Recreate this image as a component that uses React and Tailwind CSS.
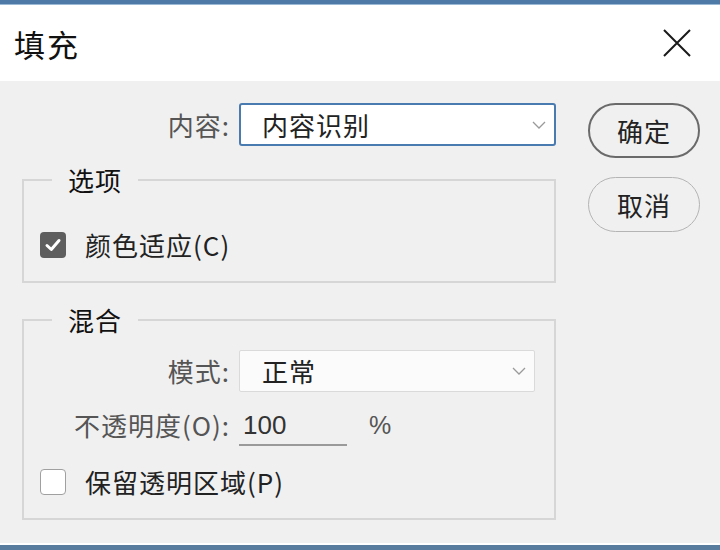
export default function App() {
  const Chevron = () => (
    <svg width="14" height="8" viewBox="0 0 14 8" fill="none">
      <path d="M1 1 L7 7 L13 1" stroke="#9a9a9a" strokeWidth="1.3" />
    </svg>
  );
  const t = "text-[26px] leading-none tracking-[1px]";
  return (
    <div className="w-[720px] h-[550px] flex flex-col bg-[#f0f0f0] overflow-hidden font-['Noto_Sans_CJK_SC',sans-serif]">
      <div className="h-[5px] bg-[#4d7aa6] border-b border-[#9bb8d4]" />
      <div className="h-[76px] bg-white flex items-center justify-between pl-[14px] pr-[28px]">
        <span className="text-[31px] leading-none tracking-[2px] text-[#111]">填充</span>
        <svg width="30" height="30" viewBox="0 0 30 30" fill="none">
          <path d="M2 2 L28 28 M28 2 L2 28" stroke="#1a1a1a" strokeWidth="2" />
        </svg>
      </div>
      <div className="flex-1 flex pl-[22px] pt-[22px]">
        <div className="w-[534px] flex flex-col">
          <div className="flex items-center h-[43px]">
            <div className={`w-[208px] text-right text-[#555] ${t}`}>内容:</div>
            <div className="ml-[9px] w-[317px] h-[43px] border-2 border-[#4a7bb0] bg-white rounded-[3px] flex items-center justify-between pl-[21px] pr-[8px]">
              <span className={`${t} text-[#222]`}>内容识别</span>
              <Chevron />
            </div>
          </div>
          <fieldset className="mt-[20px] border-2 border-[#d6d6d6] pt-[38px] pb-[23px]">
            <legend className="ml-[28px] px-[16px] text-[26px] leading-[28px] tracking-[1px] text-[#111]">选项</legend>
            <div className="flex items-center h-[26px] ml-[16px]">
              <div className="w-[26px] h-[26px] rounded-[4px] bg-[#5e5e5e] flex items-center justify-center">
                <svg width="20" height="20" viewBox="0 0 20 20" fill="none">
                  <path d="M4 10.5 L8.3 14.5 L16 5.5" stroke="#fff" strokeWidth="3" strokeLinecap="round" strokeLinejoin="round" />
                </svg>
              </div>
              <span className={`ml-[19px] ${t} tracking-[1.5px] text-[#222]`}>颜色适应(C)</span>
            </div>
          </fieldset>
          <fieldset className="mt-[23px] border-2 border-[#d6d6d6] pt-[16px] pb-[23px]">
            <legend className="ml-[28px] px-[16px] text-[26px] leading-[28px] tracking-[1px] text-[#111]">混合</legend>
            <div className="flex items-center h-[42px]">
              <div className={`w-[206px] text-right text-[#555] ${t}`}>模式:</div>
              <div className="ml-[9px] w-[296px] h-[42px] border border-[#dadada] bg-[#fbfbfb] rounded-[2px] flex items-center justify-between pl-[22px] pr-[8px]">
                <span className={`${t} text-[#222]`}>正常</span>
                <Chevron />
              </div>
            </div>
            <div className="flex items-center h-[42px] mt-[12px]">
              <div className={`w-[206px] text-right text-[#555] ${t} tracking-[1.5px]`}>不透明度(O):</div>
              <div className="ml-[9px] w-[108px] h-[42px] border-b-2 border-[#9a9a9a] flex items-center pl-[4px] pt-[2px]">
                <span className="text-[26px] leading-none text-[#333] font-['Liberation_Sans',sans-serif]">100</span>
              </div>
              <span className="ml-[22px] text-[25px] leading-none text-[#555] font-['Liberation_Sans',sans-serif]">%</span>
            </div>
            <div className="flex items-center h-[26px] mt-[23px] ml-[16px]">
              <div className="w-[26px] h-[26px] rounded-[4px] bg-white border-[1.5px] border-[#a0a0a0]" />
              <span className={`ml-[19px] ${t} tracking-[1.5px] text-[#222]`}>保留透明区域(P)</span>
            </div>
          </fieldset>
        </div>
        <div className="ml-[32px] w-[112px] flex flex-col gap-[19px]">
          <div className={`h-[55px] rounded-full border-2 border-[#6a6a6a] flex items-center justify-center ${t} text-[#222]`}>确定</div>
          <div className={`h-[55px] rounded-full border-[1.5px] border-[#b4b4b4] flex items-center justify-center ${t} text-[#222]`}>取消</div>
        </div>
      </div>
      <div className="h-[2px] bg-white" />
      <div className="h-[5px] bg-[#587c9e]" />
    </div>
  );
}
